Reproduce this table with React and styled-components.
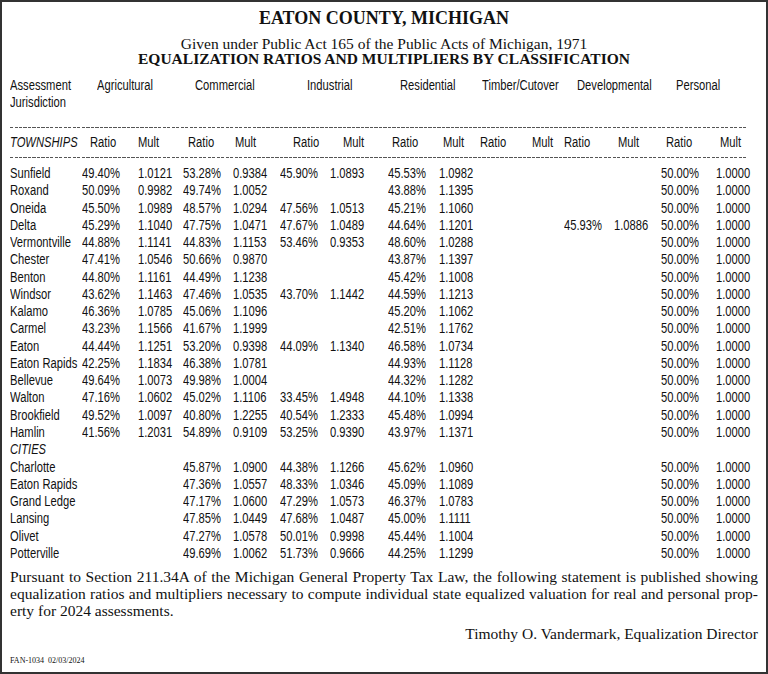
import React from "react";
import styled, { createGlobalStyle } from "styled-components";

const Global = createGlobalStyle`
  html, body { margin: 0; padding: 0; background: #fff; }
  * { box-sizing: border-box; }
`;

const COLS = "72px 56px 45px 50px 47px 50px 58px 51px 41px 52px 32px 50px 47px 55px 1fr";
const SANS = `"Liberation Sans", Arial, sans-serif`;
const SERIF = `"Liberation Serif", "Times New Roman", serif`;

const Frame = styled.div`
  width: 768px;
  height: 674px;
  border: 2px solid #333;
  padding: 5px 8px 0 8px;
  color: #111;
  display: flex;
  flex-direction: column;
`;

const Title = styled.h1`
  margin: 0;
  font-family: ${SERIF};
  font-weight: bold;
  font-size: 18px;
  line-height: 22px;
  text-align: center;
`;

const Sub = styled.div`
  font-family: ${SERIF};
  font-size: 15.5px;
  line-height: 15px;
  text-align: center;
  font-weight: ${(p) => (p.$bold ? "bold" : "normal")};
  margin-top: ${(p) => (p.$bold ? "0" : "7px")};
`;

const Table = styled.div`
  width: 738px;
  margin-top: 11px;
  font-family: ${SANS};
  font-size: 14px;
`;

const Row = styled.div`
  display: grid;
  grid-template-columns: ${COLS};
  line-height: ${(p) => p.$lh || "17.27px"};
  white-space: nowrap;
`;

const Cell = styled.div`
  padding-left: ${(p) => p.$off || 0}px;
  font-style: ${(p) => (p.$italic ? "italic" : "normal")};
  grid-column: ${(p) => (p.$span ? `span ${p.$span}` : "auto")};
`;

/* condensed face: the installed sans is narrowed to the width of a condensed cut */
const Txt = styled.span`
  display: inline-block;
  transform: scaleX(0.8);
  transform-origin: 0 50%;
  white-space: nowrap;
`;

const Dash = styled.div`
  height: 1px;
  background-image: repeating-linear-gradient(to right, #555 0 3px, transparent 3px 4.5px);
  margin-top: ${(p) => p.$mt}px;
  margin-bottom: ${(p) => p.$mb}px;
`;

const Para = styled.div`
  margin-top: 6px;
  font-family: ${SERIF};
  font-size: 15.5px;
  line-height: 17px;
  width: 748px;
`;

const Line = styled.div`
  text-align: ${(p) => (p.$justify ? "justify" : "left")};
  text-align-last: ${(p) => (p.$justify ? "justify" : "left")};
  white-space: nowrap;
`;

const Signature = styled.div`
  margin-top: 6px;
  font-family: ${SERIF};
  font-size: 15.5px;
  line-height: 17px;
  text-align: right;
  width: 748px;
`;

const Footnote = styled.div`
  margin-top: 14px;
  font-family: ${SERIF};
  font-size: 8px;
  line-height: 10px;
`;

const groups = [
  ["Agricultural", 15],
  ["Commercial", 12],
  ["Industrial", 27],
  ["Residential", 12],
  ["Timber/Cutover", 2],
  ["Developmental", 13],
  ["Personal", 15],
];

const subOffsets = [
  [8, 0],
  [5, 2],
  [13, 13],
  [4, 4],
  [0, 0],
  [0, 4],
  [5, 4],
];

const P = ["50.00%", "1.0000"];
const E = ["", ""];

const townships = [
  ["Sunfield", ["49.40%", "1.0121"], ["53.28%", "0.9384"], ["45.90%", "1.0893"], ["45.53%", "1.0982"], E, E],
  ["Roxand", ["50.09%", "0.9982"], ["49.74%", "1.0052"], E, ["43.88%", "1.1395"], E, E],
  ["Oneida", ["45.50%", "1.0989"], ["48.57%", "1.0294"], ["47.56%", "1.0513"], ["45.21%", "1.1060"], E, E],
  ["Delta", ["45.29%", "1.1040"], ["47.75%", "1.0471"], ["47.67%", "1.0489"], ["44.64%", "1.1201"], E, ["45.93%", "1.0886"]],
  ["Vermontville", ["44.88%", "1.1141"], ["44.83%", "1.1153"], ["53.46%", "0.9353"], ["48.60%", "1.0288"], E, E],
  ["Chester", ["47.41%", "1.0546"], ["50.66%", "0.9870"], E, ["43.87%", "1.1397"], E, E],
  ["Benton", ["44.80%", "1.1161"], ["44.49%", "1.1238"], E, ["45.42%", "1.1008"], E, E],
  ["Windsor", ["43.62%", "1.1463"], ["47.46%", "1.0535"], ["43.70%", "1.1442"], ["44.59%", "1.1213"], E, E],
  ["Kalamo", ["46.36%", "1.0785"], ["45.06%", "1.1096"], E, ["45.20%", "1.1062"], E, E],
  ["Carmel", ["43.23%", "1.1566"], ["41.67%", "1.1999"], E, ["42.51%", "1.1762"], E, E],
  ["Eaton", ["44.44%", "1.1251"], ["53.20%", "0.9398"], ["44.09%", "1.1340"], ["46.58%", "1.0734"], E, E],
  ["Eaton Rapids", ["42.25%", "1.1834"], ["46.38%", "1.0781"], E, ["44.93%", "1.1128"], E, E],
  ["Bellevue", ["49.64%", "1.0073"], ["49.98%", "1.0004"], E, ["44.32%", "1.1282"], E, E],
  ["Walton", ["47.16%", "1.0602"], ["45.02%", "1.1106"], ["33.45%", "1.4948"], ["44.10%", "1.1338"], E, E],
  ["Brookfield", ["49.52%", "1.0097"], ["40.80%", "1.2255"], ["40.54%", "1.2333"], ["45.48%", "1.0994"], E, E],
  ["Hamlin", ["41.56%", "1.2031"], ["54.89%", "0.9109"], ["53.25%", "0.9390"], ["43.97%", "1.1371"], E, E],
];

const cities = [
  ["Charlotte", E, ["45.87%", "1.0900"], ["44.38%", "1.1266"], ["45.62%", "1.0960"], E, E],
  ["Eaton Rapids", E, ["47.36%", "1.0557"], ["48.33%", "1.0346"], ["45.09%", "1.1089"], E, E],
  ["Grand Ledge", E, ["47.17%", "1.0600"], ["47.29%", "1.0573"], ["46.37%", "1.0783"], E, E],
  ["Lansing", E, ["47.85%", "1.0449"], ["47.68%", "1.0487"], ["45.00%", "1.1111"], E, E],
  ["Olivet", E, ["47.27%", "1.0578"], ["50.01%", "0.9998"], ["45.44%", "1.1004"], E, E],
  ["Potterville", E, ["49.69%", "1.0062"], ["51.73%", "0.9666"], ["44.25%", "1.1299"], E, E],
];

function C({ children, ...rest }) {
  return (
    <Cell {...rest}>
      {children ? <Txt>{children}</Txt> : null}
    </Cell>
  );
}

function DataRow({ row }) {
  const [name, ...pairs] = row;
  const all = [...pairs, P];
  return (
    <Row>
      <C>{name}</C>
      {all.map((pair, i) => (
        <React.Fragment key={i}>
          <C>{pair[0]}</C>
          <C>{pair[1]}</C>
        </React.Fragment>
      ))}
    </Row>
  );
}

export default function App() {
  return (
    <>
      <Global />
      <Frame>
        <Title>EATON COUNTY, MICHIGAN</Title>
        <Sub>Given under Public Act 165 of the Public Acts of Michigan, 1971</Sub>
        <Sub $bold>EQUALIZATION RATIOS AND MULTIPLIERS BY CLASSIFICATION</Sub>
        <Table>
          <Row $lh="17px">
            <C>
              Assessment
              <br />
              Jurisdiction
            </C>
            {groups.map(([g, off]) => (
              <C key={g} $span={2} $off={off}>
                {g}
              </C>
            ))}
          </Row>
          <Dash $mt={16} $mb={6} />
          <Row $lh="17px">
            <C $italic>TOWNSHIPS</C>
            {subOffsets.map(([r, m], i) => (
              <React.Fragment key={i}>
                <C $off={r}>Ratio</C>
                <C $off={m}>Mult</C>
              </React.Fragment>
            ))}
          </Row>
          <Dash $mt={6} $mb={7} />
          {townships.map((r, i) => (
            <DataRow key={"t" + i} row={r} />
          ))}
          <Row>
            <C $italic>CITIES</C>
          </Row>
          {cities.map((r, i) => (
            <DataRow key={"c" + i} row={r} />
          ))}
        </Table>
        <Para>
          <Line $justify>
            Pursuant to Section 211.34A of the Michigan General Property Tax Law, the following statement is published showing
          </Line>
          <Line $justify>
            equalization ratios and multipliers necessary to compute individual state equalized valuation for real and personal prop-
          </Line>
          <Line>erty for 2024 assessments.</Line>
        </Para>
        <Signature>Timothy O. Vandermark, Equalization Director</Signature>
        <Footnote>FAN-1034&nbsp;&nbsp;02/03/2024</Footnote>
      </Frame>
    </>
  );
}
